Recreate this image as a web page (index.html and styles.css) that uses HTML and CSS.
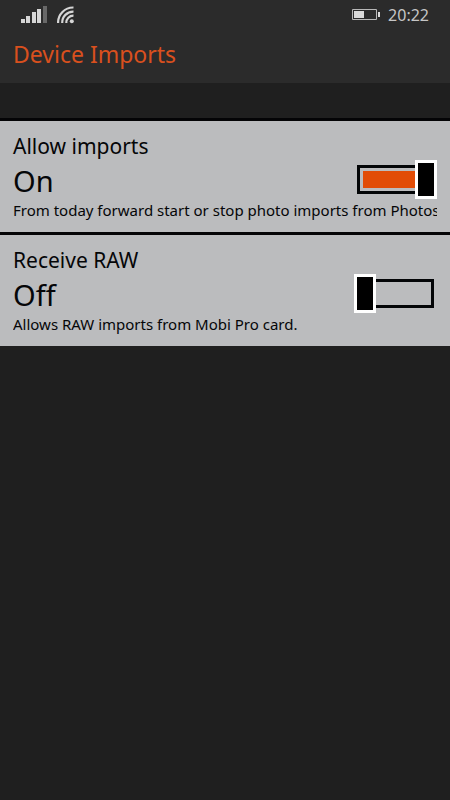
FILE: index.html
```html
<!DOCTYPE html>
<html lang="en">
<head>
<meta charset="utf-8">
<meta name="viewport" content="width=device-width, initial-scale=1">
<title>Device Imports</title>
<link rel="stylesheet" href="styles.css">
</head>
<body>
<header class="header">
  <div class="status">
    <svg class="signal" width="26" height="18" viewBox="0 0 26 18" aria-hidden="true">
      <path fill="#d6d6d6" d="M0 13h4v4H0zM5 10h4v7H5zM11 6h4v11h-4zM16 3h4v14h-4z"/>
      <path fill="#686868" d="M22 0h4v17h-4z"/>
    </svg>
    <svg class="wifi" width="18" height="18" viewBox="0 0 18 18" aria-hidden="true">
      <g fill="none" stroke="#d6d6d6" stroke-width="2.2">
        <path d="M1.100 17A15 15 0 0 1 16.500 1.500"/>
        <path d="M5.200 17A11 11 0 0 1 16.500 5.600"/>
        <path d="M9.300 17A7 7 0 0 1 16.500 9.700"/>
      </g>
      <circle cx="14.800" cy="15.200" r="2" fill="#d6d6d6"/>
    </svg>
    <svg class="battery" width="29" height="12" viewBox="0 0 29 12" aria-hidden="true">
      <path fill="none" stroke="#b8b8b8" d="M.5.5h24v10H.5z"/>
      <path fill="#dadada" d="M2 2h10v7H2zM26 3h2v5h-2z"/>
    </svg>
    <time class="clock">20:22</time>
  </div>
  <h1 class="title">Device Imports</h1>
</header>
<main class="settings">
  <section class="setting">
    <label class="name" for="allow">Allow imports</label>
    <div class="state">On</div>
    <p class="note" id="allow-note">From today forward start or stop photo imports from Photos</p>
    <input class="switch" type="checkbox" role="switch" id="allow" aria-describedby="allow-note" checked>
  </section>
  <section class="setting">
    <label class="name" for="raw">Receive RAW</label>
    <div class="state">Off</div>
    <p class="note" id="raw-note">Allows RAW imports from Mobi Pro card.</p>
    <input class="switch" type="checkbox" role="switch" id="raw" aria-describedby="raw-note">
  </section>
</main>
</body>
</html>
```
FILE: styles.css
```css
*, *::before, *::after { box-sizing: border-box; }
body {
  margin: 0;
  min-height: 100vh;
  background: #1f1f1f;
  color: #050608;
  font-family: "Noto Sans", "Open Sans", sans-serif;
}
.header {
  background: #2b2b2b;
  padding: 0 13px 13px;
}
.status {
  display: flex;
  align-items: center;
  height: 38px;
  padding: 0 8px 8px;
}
.wifi { margin-left: 10px; }
.battery { margin-left: auto; }
.clock {
  margin-left: 7px;
  font-size: 16px;
  line-height: 24px;
  color: #c6c6c6;
}
.title {
  margin: 0;
  font-size: 23px;
  font-weight: 400;
  line-height: 32px;
  color: #d9501e;
}
.settings { margin-top: 35px; }
.setting {
  display: grid;
  grid-template-columns: minmax(0, 1fr) auto;
  grid-template-rows: 30px 38px 21px;
  border-top: 3px solid #040406;
  background: #bbbcbe;
  padding: 10px 13px 12px;
}
.name {
  font-size: 21px;
  line-height: 30px;
}
.state {
  grid-area: 2 / 1;
  font-size: 29px;
  line-height: 40px;
}
.note {
  grid-area: 3 / 1 / 4 / 3;
  align-self: end;
  margin: 0;
  overflow: hidden;
  white-space: nowrap;
  font-size: 15px;
  line-height: 20px;
}
.switch {
  appearance: none;
  display: grid;
  align-items: center;
  align-self: end;
  grid-area: 2 / 2;
  width: 83px;
  height: 39px;
  margin: 0;
}
.switch::before,
.switch::after {
  content: "";
  grid-area: 1 / 1;
}
.switch::before {
  height: 29px;
  margin: 0 3px;
  border: 3px solid #030507;
}
.switch:checked::before {
  padding: 3px;
  background: #e24c06 content-box;
}
.switch::after {
  width: 22px;
  height: 39px;
  border: 3px solid #fff;
  background: #000;
}
.switch:checked::after { justify-self: end; }
```
